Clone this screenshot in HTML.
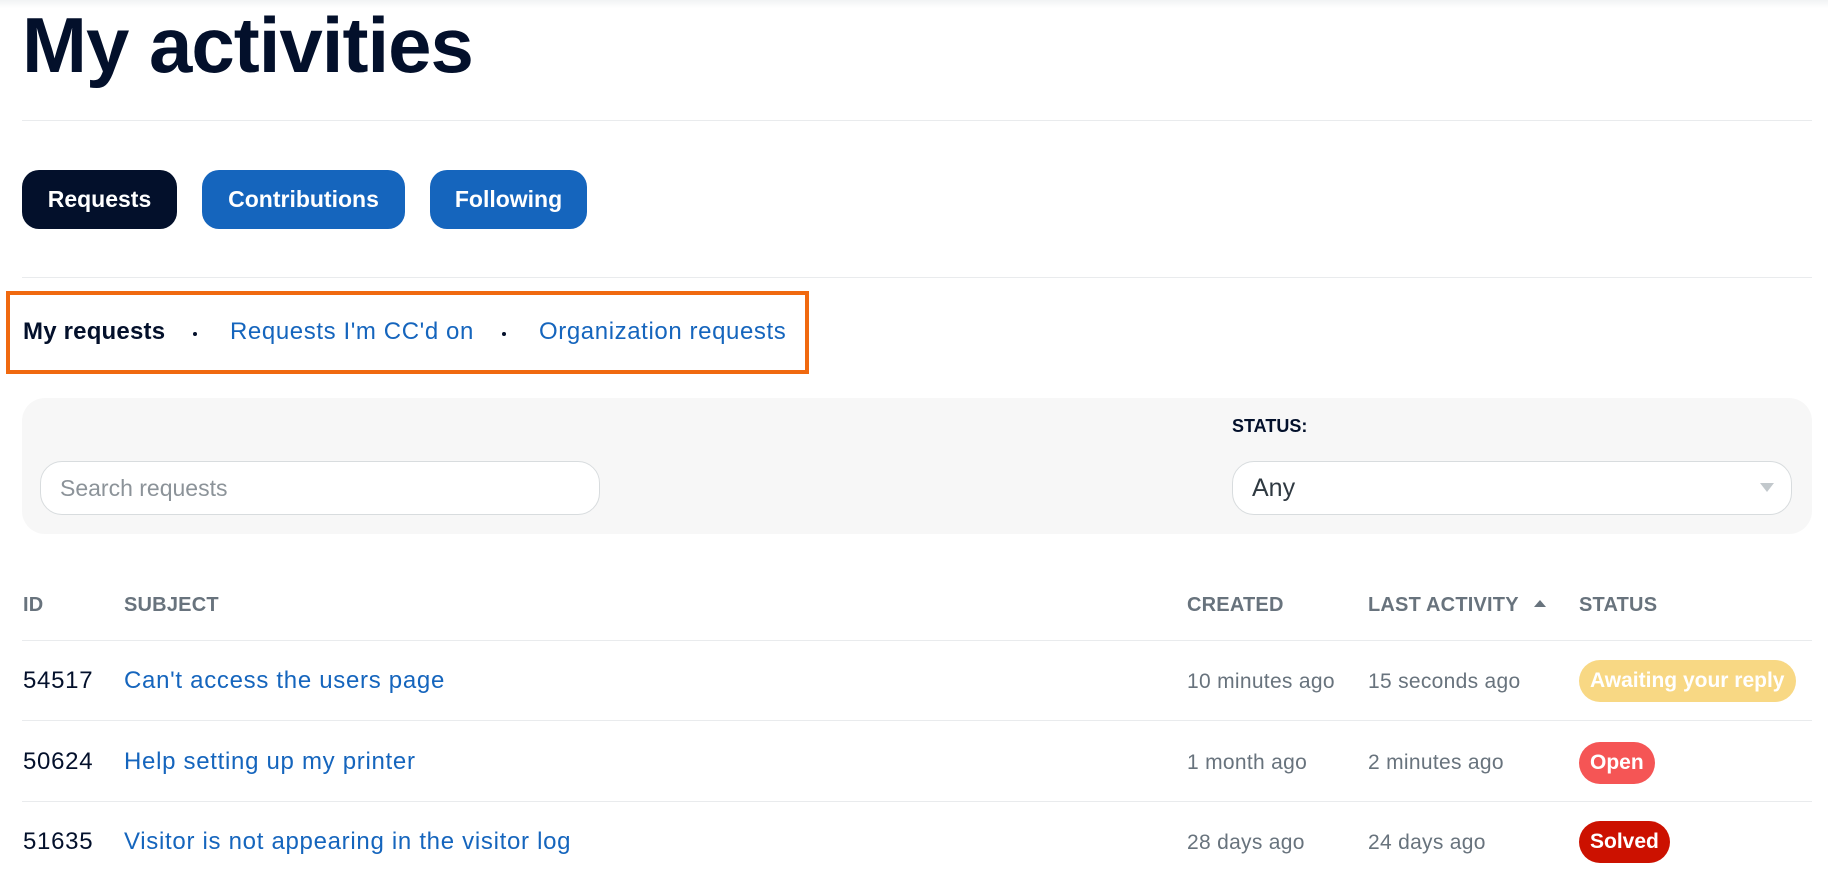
<!DOCTYPE html>
<html><head><meta charset="utf-8"><style>
*{box-sizing:border-box;margin:0;padding:0}
body{width:1828px;height:880px;overflow:hidden;background:#fff;font-family:"Liberation Sans",Arial,sans-serif;color:#03102b;position:relative}
.abs{position:absolute}
.top{left:0;top:0;width:1828px;height:8px;background:linear-gradient(#f1f3f4,#fff)}
h1{position:absolute;left:22px;top:0px;font-size:78px;font-weight:700;letter-spacing:-1px;line-height:90px;color:#03102b}
.hr{position:absolute;left:22px;width:1790px;height:1px;background:#e9ebed}
.btn{position:absolute;top:170px;height:59px;border-radius:17px;background:#1565bd;color:#fff;font-size:23px;font-weight:700;line-height:59px;text-align:center}
.tab{position:absolute;top:318px;font-size:24px;line-height:28px;letter-spacing:0.6px}
.dot{position:absolute;top:332px;width:4px;height:4px;border-radius:2px;background:#03102b}
.panel{left:22px;top:398px;width:1790px;height:136px;background:#f7f7f7;border-radius:23px}
.inp{position:absolute;top:461px;height:54px;border:1px solid #d8dcde;border-radius:22px;background:#fff;font-size:23px;line-height:52px;padding-left:19px}
.th{position:absolute;top:593px;font-size:20px;font-weight:700;color:#68737d;line-height:24px;letter-spacing:0.2px}
.td{position:absolute;font-size:24px;line-height:28px;letter-spacing:0.7px}
.g{color:#68737d;font-size:21px;letter-spacing:0.3px}
.l{color:#1565bd}
.b{position:absolute;left:1579px;height:42px;border-radius:21px;color:#fff;font-size:21px;font-weight:700;line-height:42px;padding:0 11px}
</style></head><body>
<div class="abs top"></div>
<h1>My activities</h1>
<div class="hr" style="top:120px"></div>
<div class="btn" style="left:22px;width:155px;background:#03102b">Requests</div>
<div class="btn" style="left:202px;width:203px">Contributions</div>
<div class="btn" style="left:430px;width:157px">Following</div>
<div class="hr" style="top:277px"></div>
<div class="abs" style="left:6px;top:291px;width:803px;height:83px;border:4px solid #f0690f"></div>
<div class="tab" style="left:23px;font-weight:700;letter-spacing:0.2px">My requests</div>
<div class="dot" style="left:193px"></div>
<div class="tab l" style="left:230px">Requests I'm CC'd on</div>
<div class="dot" style="left:502px"></div>
<div class="tab l" style="left:539px">Organization requests</div>
<div class="abs panel"></div>
<div class="inp" style="left:40px;width:560px;color:#8c9399">Search requests</div>
<div class="abs" style="left:1232px;top:416px;font-size:18px;font-weight:700">STATUS:</div>
<div class="inp" style="left:1232px;width:560px;color:#2f3941;font-size:25px">Any</div>
<div class="abs" style="left:1760px;top:483px;width:0;height:0;border-left:7px solid transparent;border-right:7px solid transparent;border-top:9px solid #c2c8cc"></div>
<div class="th" style="left:23px">ID</div>
<div class="th" style="left:124px">SUBJECT</div>
<div class="th" style="left:1187px">CREATED</div>
<div class="th" style="left:1368px">LAST ACTIVITY</div>
<div class="abs" style="left:1534px;top:600px;width:0;height:0;border-left:6px solid transparent;border-right:6px solid transparent;border-bottom:7px solid #68737d"></div>
<div class="th" style="left:1579px">STATUS</div>
<div class="hr" style="top:640px"></div>
<div class="hr" style="top:720px"></div>
<div class="hr" style="top:801px"></div>

<div class="td" style="left:23px;top:667px">54517</div>
<div class="td l" style="left:124px;top:667px">Can't access the users page</div>
<div class="td g" style="left:1187px;top:668px">10 minutes ago</div>
<div class="td g" style="left:1368px;top:668px">15 seconds ago</div>
<div class="b" style="top:660px;background:#f8d884">Awaiting your reply</div>

<div class="td" style="left:23px;top:748px">50624</div>
<div class="td l" style="left:124px;top:748px">Help setting up my printer</div>
<div class="td g" style="left:1187px;top:749px">1 month ago</div>
<div class="td g" style="left:1368px;top:749px">2 minutes ago</div>
<div class="b" style="top:742px;background:#f55555">Open</div>

<div class="td" style="left:23px;top:828px">51635</div>
<div class="td l" style="left:124px;top:828px">Visitor is not appearing in the visitor log</div>
<div class="td g" style="left:1187px;top:829px">28 days ago</div>
<div class="td g" style="left:1368px;top:829px">24 days ago</div>
<div class="b" style="top:821px;background:#cc1100">Solved</div>
</body></html>
